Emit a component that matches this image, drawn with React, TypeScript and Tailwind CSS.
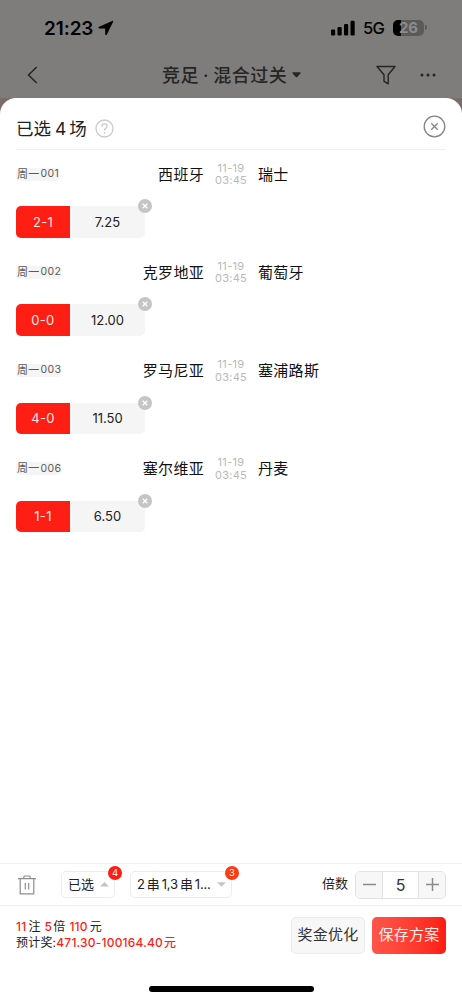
import * as React from 'react';

interface Match {
  id: string;
  home: string;
  away: string;
  date: string;
  time: string;
  score: string;
  odds: string;
}

const MATCHES: Match[] = [
  { id: '001', home: '西班牙', away: '瑞士', date: '11-19', time: '03:45', score: '2-1', odds: '7.25' },
  { id: '002', home: '克罗地亚', away: '葡萄牙', date: '11-19', time: '03:45', score: '0-0', odds: '12.00' },
  { id: '003', home: '罗马尼亚', away: '塞浦路斯', date: '11-19', time: '03:45', score: '4-0', odds: '11.50' },
  { id: '006', home: '塞尔维亚', away: '丹麦', date: '11-19', time: '03:45', score: '1-1', odds: '6.50' },
];

function StatusBar() {
  return (
    <div className="flex h-14 shrink-0 items-center pl-[44px] pr-[35px] text-black">
      <span className="text-[19px] font-semibold leading-none tracking-[-0.1px]">21:23</span>
      <svg className="ml-[5px]" width="16" height="16" viewBox="0 0 16 16" fill="currentColor">
        <path d="M14.2.9 1.1 6.7c-1 .5-.7 1.7.3 1.7h5.8v5.8c0 1 1.300 1.300 1.700.3L15.100 1.700c.3-.7-.2-1.100-.9-.8z" />
      </svg>
      <svg className="ml-auto -mt-px" width="24" height="16" viewBox="0 0 24 16" fill="currentColor">
        <rect x="0" y="9.500" width="4.200" height="6" rx="1.200" />
        <rect x="6.500" y="7" width="4.200" height="8.500" rx="1.200" />
        <rect x="13" y="4" width="4.200" height="11.500" rx="1.200" />
        <rect x="19.500" y="0.800" width="4.200" height="14.700" rx="1.200" />
      </svg>
      <span className="ml-[8px] text-[16.500px] font-medium leading-none tracking-[-0.8px]">5G</span>
      <div className="-mt-px ml-[9px] flex items-center">
        <div className="flex h-4 w-[31px] items-center justify-center rounded-[5px] bg-[linear-gradient(90deg,#000_26%,#5c5a59_26%)]">
          <span className="text-[15px] font-bold leading-none text-[#8d8b89]">26</span>
        </div>
        <div className="ml-px h-[5px] w-[2px] rounded-r-full bg-[#5c5a59]" />
      </div>
    </div>
  );
}

function NavBar() {
  return (
    <div className="flex h-[42px] shrink-0 items-center pb-[5px] pl-[27px] pr-[26px] text-[#262524]">
      <svg width="11" height="18" viewBox="0 0 11 18" fill="none" stroke="currentColor" strokeWidth="1.500">
        <path d="M9.700 1 1.500 9l8.200 8" />
      </svg>
      <div className="ml-[124px] flex items-center">
        <span className="whitespace-nowrap pt-[2px] text-[18px] font-medium leading-none tracking-[0.5px] [word-spacing:-1.2px]">竞足 · 混合过关</span>
        <svg className="ml-[5px]" width="9" height="6" viewBox="0 0 9 6" fill="currentColor">
          <path d="M1.200.3h6.600c.8 0 1.100.7.6 1.200L5.200 5c-.4.4-1 .4-1.400 0L.6 1.500C.1 1 .400.3 1.200.3z" />
        </svg>
      </div>
      <svg className="ml-auto" width="20" height="20" viewBox="0 0 20 20" fill="none" stroke="currentColor" strokeWidth="1.400" strokeLinejoin="round">
        <path d="M1 1.500h18L12.200 9.800v9L8 16.300V9.800z" />
      </svg>
      <svg className="ml-[24px]" width="16" height="4" viewBox="0 0 16 4" fill="currentColor">
        <circle cx="2" cy="2" r="1.500" />
        <circle cx="8" cy="2" r="1.500" />
        <circle cx="14" cy="2" r="1.500" />
      </svg>
    </div>
  );
}

function MatchRow({ match }: { match: Match }) {
  return (
    <div className="h-[98.3px]">
      <div className="flex h-12 items-center">
        <div className="flex w-[108px] shrink-0">
          <span className="flex h-[13px] items-center whitespace-nowrap rounded-sm bg-[#f5f5f5] pl-px text-[11px] leading-none tracking-[0.2px] text-[#5a5a5a]">
            周一<span className="ml-px text-[10.500px] tracking-[0.4px]">{match.id}</span>
          </span>
        </div>
        <div className="w-[80px] shrink-0 whitespace-nowrap text-right text-[15px] leading-none tracking-[0.3px] text-[#111]">{match.home}</div>
        <div className="flex w-[54px] shrink-0 flex-col items-center text-[11px] leading-[12.500px] tracking-[0.3px] text-[#b9b9b9]">
          <span>{match.date}</span>
          <span>{match.time}</span>
        </div>
        <div className="whitespace-nowrap text-[15px] leading-none tracking-[0.3px] text-[#111]">{match.away}</div>
      </div>
      <div className="relative mt-2 flex h-[31.500px] w-[129px] text-[13px]">
        <div className="flex w-[54px] items-center justify-center rounded-l-[5px] bg-[#ff1e14] pt-px tracking-[0.3px] text-[#ffe9e6]">{match.score}</div>
        <div className="flex flex-1 items-center justify-center rounded-r-[5px] bg-[#f5f5f5] pt-px text-[#222]">{match.odds}</div>
        <button className="absolute -right-[7px] -top-[7px] flex size-[14px] items-center justify-center rounded-full bg-[#c5c5c5]">
          <svg width="6" height="6" viewBox="0 0 6 6" stroke="#fff" strokeWidth="1.300">
            <path d="m.7.7 4.600 4.600M5.300.7.7 5.300" />
          </svg>
        </button>
      </div>
    </div>
  );
}

function Badge({ value, className }: { value: number; className: string }) {
  return (
    <span className={`absolute flex size-[14px] items-center justify-center rounded-full text-[9.500px] leading-none text-white ${className}`}>
      {value}
    </span>
  );
}

function Toolbar({ count, onChange }: { count: number; onChange: (n: number) => void }) {
  return (
    <div className="flex h-[43px] shrink-0 items-center border-y border-[#f0f0f0] pl-[18px] pr-4">
      <svg width="18" height="20" viewBox="0 0 18 20" fill="none" stroke="#8e8e8e" strokeWidth="1.200">
        <path d="M0 3.600h18M5.500 3.400 6.300 1h5.400l.8 2.400M2.200 3.800v15h13.600v-15M7.300 8v6.500M10.700 8v6.500" />
      </svg>
      <div className="relative ml-[25px] flex h-[27px] w-[54px] items-center rounded-[5px] border border-[#ececec] pl-[6px] pr-[5px] text-[13px] text-[#222]">
        已选
        <svg className="ml-auto" width="9" height="5" viewBox="0 0 9 5" fill="#c4c4c4">
          <path d="M4.500 0 9 4.600H0z" />
        </svg>
        <Badge value={4} className="-right-[8px] -top-[6px] bg-[#ff1e14]" />
      </div>
      <div className="relative ml-[15px] flex h-[27px] w-[102px] items-center whitespace-nowrap rounded-[5px] border border-[#ececec] pl-[6px] pr-[5px] text-[13px] text-[#222]">
        <span className="flex gap-[2px] tracking-[-0.15px]"><span>2</span><span>串</span><span>1,3</span><span>串</span><span>1...</span></span>
        <svg className="ml-auto" width="9" height="5" viewBox="0 0 9 5" fill="#c4c4c4">
          <path d="M0 .2h9L4.500 4.800z" />
        </svg>
        <Badge value={3} className="-right-[8px] -top-[6px] bg-[#ff3a14]" />
      </div>
      <span className="ml-auto pb-px text-[13px] text-[#222]">倍数</span>
      <div className="ml-[7px] flex h-[28px] w-[91px] overflow-hidden rounded-[5px] border border-[#e2e2e2]">
        <button className="flex w-[27px] items-center justify-center border-r border-[#e2e2e2] bg-[#f7f7f7]" onClick={() => onChange(Math.max(1, count - 1))}>
          <svg width="13" height="13" viewBox="0 0 13 13" stroke="#8a8a8a" strokeWidth="1.500"><path d="M0 6.500h13" /></svg>
        </button>
        <span className="flex flex-1 items-center justify-center text-[16px] text-[#333]">{count}</span>
        <button className="flex w-[27px] items-center justify-center border-l border-[#e2e2e2] bg-[#f7f7f7]" onClick={() => onChange(count + 1)}>
          <svg width="13" height="13" viewBox="0 0 13 13" stroke="#8a8a8a" strokeWidth="1.500"><path d="M0 6.500h13M6.500 0v13" /></svg>
        </button>
      </div>
    </div>
  );
}

export default function App() {
  const [multiple, setMultiple] = React.useState(5);

  return (
    <div className="flex h-[1000px] w-[462px] flex-col overflow-hidden bg-[#7f7d7b] font-['Inter','Noto_Sans_CJK_SC',sans-serif]">
      <StatusBar />
      <NavBar />

      <div className="flex min-h-0 flex-1 flex-col bg-[#7a6c6c]">
        <div className="flex min-h-0 flex-1 flex-col rounded-t-[16px] bg-white">
          {/* Sheet header */}
          <div className="mx-4 flex h-[52px] shrink-0 items-center border-b border-[#f0f0f0] pt-[9px]">
            <span className="whitespace-nowrap pt-[2px] text-[17.500px] leading-none text-[#222]">
              已选<span className="ml-[4px] mr-[3px]">4</span>场
            </span>
            <svg className="ml-[8px]" width="19" height="19" viewBox="0 0 19 19" fill="none" stroke="#cacaca" strokeWidth="1.300">
              <circle cx="9.500" cy="9.500" r="8.500" />
              <path d="M6.900 7.500c0-1.700 1.100-2.600 2.600-2.600s2.600.9 2.600 2.300c0 2-2.600 1.900-2.600 4.200M9.500 12.900v1.500" />
            </svg>
            <button className="-mt-[4px] ml-auto">
              <svg width="23" height="23" viewBox="0 0 23 23" fill="none" stroke="#858585" strokeWidth="1.300">
                <circle cx="11.500" cy="11.500" r="10.300" />
                <path d="m8.300 8.300 6.400 6.400M14.700 8.300l-6.400 6.400" />
              </svg>
            </button>
          </div>

          {/* Selected matches */}
          <div className="min-h-0 flex-1 px-4">
            {MATCHES.map(match => (
              <MatchRow key={match.id} match={match} />
            ))}
          </div>

          <Toolbar count={multiple} onChange={setMultiple} />

          {/* Summary and actions */}
          <div className="flex h-[58px] shrink-0 items-center pl-4 pr-4">
            <div className="whitespace-nowrap text-[12px] leading-[16.500px] tracking-[0.2px] text-[#222]">
              <div className="flex">
                <span className="font-medium text-[#ff1e14]">11</span>
                <span className="ml-[2px] mr-[4px]">注</span>
                <span className="font-medium text-[#ff1e14]">{multiple}</span>
                <span className="ml-px mr-[4px]">倍</span>
                <span className="font-medium text-[#ff1e14]">{multiple * 22}</span>
                <span className="ml-[2px]">元</span>
              </div>
              <div className="flex">
                <span>预计奖:</span>
                <span className="font-medium text-[#ff1e14]">471.30-100164.40</span>
                <span className="ml-px font-medium text-[#ff1e14]">元</span>
              </div>
            </div>
            <button className="ml-auto h-[37px] w-[74px] whitespace-nowrap rounded-[5px] border border-[#ebebeb] bg-[#f7f7f7] pt-px text-[15px] tracking-[0.3px] text-[#333]">奖金优化</button>
            <button className="ml-[7px] h-[37px] w-[74px] whitespace-nowrap rounded-[5px] bg-gradient-to-r from-[#ff5549] to-[#ff1a10] pt-px text-[15px] tracking-[0.3px] text-[#ffefed]">保存方案</button>
          </div>

          {/* Home indicator */}
          <div className="flex h-[36px] shrink-0 justify-center pt-[22px]">
            <div className="h-[5.500px] w-[165px] rounded-full bg-black" />
          </div>
        </div>
      </div>
    </div>
  );
}
